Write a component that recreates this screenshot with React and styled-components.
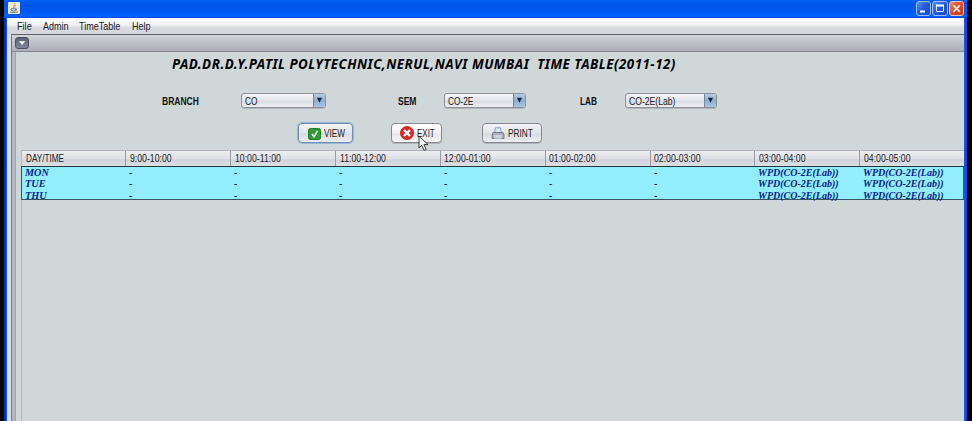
import React from "react";
import styled, { createGlobalStyle } from "styled-components";

const Global = createGlobalStyle`
  * { box-sizing: border-box; }
  body { margin: 0; background: #000; overflow: hidden; }
`;

const Screen = styled.div`
  width: 972px;
  height: 421px;
  padding: 0 5px 0 4px;
  background: #000;
  font-family: "Liberation Sans", Arial, sans-serif;
  font-size: 10.5px;
  color: #222;
  white-space: nowrap;
`;

const Window = styled.div`
  height: 421px;
  display: flex;
  flex-direction: column;
  padding: 0 2px 0 3px;
  background: linear-gradient(90deg, #0024c0 0, #0038ee 2px, #1c60f0 3px, #1c60f0 960px, #0a3cd8 963px);
`;

const TitleBar = styled.header`
  height: 18px;
  flex: none;
  margin: 0 -2px 0 -3px;
  padding: 0 3px 0 4px;
  display: flex;
  align-items: flex-start;
  justify-content: space-between;
  background: linear-gradient(#0060f4 0, #0055ea 5px, #0058f4 12px, #0062ff 16px, #0048d8 18px);
`;

const JavaIcon = styled.svg`
  width: 12px;
  height: 12px;
  margin-top: 2px;
`;

const Controls = styled.div`
  display: flex;
  gap: 1px;
  padding-top: 1px;
`;

const Control = styled.div`
  width: 15.5px;
  height: 15px;
  border: 1px solid ${(p) => (p.$close ? "#f3c1b4" : "#9dbdf8")};
  border-radius: 3px;
  background: ${(p) =>
    p.$close
      ? "linear-gradient(135deg, #f08a68, #e2491f 50%, #c83808)"
      : "linear-gradient(135deg, #5a8df2, #2259dc 50%, #1648cc)"};
  svg { display: block; width: 13px; height: 13px; }
`;

/* Narrow interface lettering: full height, condensed horizontally. */
const Text = styled.span`
  display: inline-block;
  transform: scaleX(${(p) => p.$x});
  transform-origin: left center;
`;

const MenuBar = styled.nav`
  height: 16px;
  flex: none;
  display: flex;
  gap: 12px;
  padding: 2px 0 0 9.5px;
  margin-right: 1px;
  line-height: 13px;
  background: linear-gradient(#ffffff, #f0f0f3 45%, #d9dbe0 60%, #d4d6dc);
`;

const MenuItem = styled.div`
  width: ${(p) => p.$w}px;
`;

const Desktop = styled.div`
  flex: 1;
  min-height: 0;
  margin-right: 1px;
  padding-left: 4px;
  background: #dcdfe4;
`;

const InternalFrame = styled.section`
  height: 100%;
  display: flex;
  flex-direction: column;
  border-top: 1px solid #5e626b;
  border-left: 1px solid #747883;
  background: #b4b8c2;
`;

const FrameBar = styled.div`
  height: 17px;
  flex: none;
  padding: 2px 0 0 3px;
  border-bottom: 1px solid #858892;
  background: linear-gradient(#d2d5d9, #bec1c8 45%, #acafb9);
`;

const FrameMenu = styled.div`
  width: 14px;
  height: 12px;
  border: 1px solid #4a5164;
  border-radius: 3px;
  background: linear-gradient(#5c6478, #7d869b);
  svg { display: block; width: 12px; height: 10px; }
`;

const Content = styled.main`
  flex: 1;
  min-height: 0;
  display: flex;
  flex-direction: column;
  margin-left: 3px;
  padding-left: 5px;
  border-left: 1px solid #9da4ac;
  background: #cfd7d9;
`;

const Heading = styled.h1`
  height: 36px;
  flex: none;
  margin: 0;
  padding: 3px 0 0 151px;
  font: italic bold 13.3px/18px "Noto Sans", sans-serif;
  letter-spacing: 0.51px;
  color: #000;
  white-space: pre;
`;

const Filters = styled.div`
  height: 26px;
  flex: none;
  display: flex;
  align-items: center;
  padding: 0 0 1px 141px;
`;

const Label = styled.label`
  width: ${(p) => p.$w}px;
  font-weight: bold;
  color: #111;
`;

const Select = styled.div`
  width: ${(p) => p.$w}px;
  height: 15px;
  margin-right: ${(p) => p.$after || 0}px;
  display: flex;
  justify-content: space-between;
  border: 1px solid #8d9199;
  border-radius: 3px;
  padding-left: 3px;
  line-height: 14px;
  overflow: hidden;
  background: linear-gradient(#f5f6f8, #e2e4e9 50%, #d9dce1 55%, #edeff2);
  box-shadow: 0 1px 0 #b0b6ba;
`;

const Arrow = styled.svg`
  width: 12px;
  height: 13px;
  border-left: 1px solid #7189a5;
  background: linear-gradient(#b5cbe2, #90afd0 50%, #a9c4df);
`;

const Actions = styled.div`
  height: 36px;
  flex: none;
  display: flex;
  align-items: flex-start;
  padding: 9px 0 0 277px;
`;

const Button = styled.div`
  width: ${(p) => p.$w}px;
  height: 20px;
  margin-right: ${(p) => p.$after || 0}px;
  padding-left: ${(p) => p.$pad}px;
  display: flex;
  align-items: center;
  gap: 3px;
  position: relative;
  border: 1px solid ${(p) => (p.$focus ? "#6d8fb9" : "#858991")};
  border-radius: 4px;
  box-shadow: ${(p) => (p.$focus ? "0 0 0 1px #9db5d2" : "0 1px 0 #b0b6ba")};
  background: ${(p) =>
    p.$hover
      ? "linear-gradient(#ffffff, #f1f2f5 50%, #e4e6eb 55%, #fbfbfc)"
      : "linear-gradient(#f3f4f6, #e2e4e8 50%, #d8dbe0 55%, #eceef1)"};
`;

const Glyph = styled.svg`
  flex: none;
  width: ${(p) => p.$w}px;
  height: ${(p) => p.$h}px;
  margin-top: ${(p) => p.$drop || 0}px;
`;

const Cursor = styled.svg`
  position: absolute;
  left: 26px;
  top: 11px;
  width: 11px;
  height: 17px;
  z-index: 2;
`;

const Table = styled.div`
  flex: 1;
  min-height: 0;
  border-left: 1px solid #b3b9c1;
`;

const Row = styled.div`
  display: grid;
  grid-template-columns: 104.4px repeat(8, 104.85px);
  overflow: hidden;
`;

const HeaderRow = styled(Row)`
  height: 16px;
  line-height: 15px;
  border-top: 1px solid #aeb2b9;
  background: linear-gradient(#eceef1, #dfe0e6 50%, #d2d4dc 60%, #dddfe5);
`;

const HeaderCell = styled.div`
  padding-left: 3.5px;
  border-right: 1px solid #989ca5;
`;

const Body = styled.div`
  height: 34px;
  margin-left: -1px;
  border: 1px solid #34565e;
  border-top-color: #20373c;
  background: #92eefc;
  font: italic bold 11px/11px "Liberation Serif", "Times New Roman", serif;
  color: #081b91;
`;

const BodyRow = styled(Row)`
  height: 11.3px;
`;

const Cell = styled.div`
  padding-left: 3px;
`;

const times = ["9:00-10:00", "10:00-11:00", "11:00-12:00", "12:00-01:00", "01:00-02:00", "02:00-03:00", "03:00-04:00", "04:00-05:00"];
const days = ["MON", "TUE", "THU"];
const slots = ["-", "-", "-", "-", "-", "-", "WPD(CO-2E(Lab))", "WPD(CO-2E(Lab))"];

function Combo({ value, w, after, x }) {
  return (
    <Select $w={w} $after={after}>
      <Text $x={x}>{value}</Text>
      <Arrow viewBox="0 0 12 13"><path d="M3.2 3.5h5.6L6 9z" fill="#1c2634" /></Arrow>
    </Select>
  );
}

export default function App() {
  return (
    <Screen>
      <Global />
      <Window>
        <TitleBar>
          <JavaIcon viewBox="0 0 12 12">
            <rect width="12" height="12" rx="1" fill="#eeeae4" />
            <path d="M6.5 1C8 3 4 3.5 5.8 6M7.8 3C6 4 7.5 5 6.6 6" fill="none" stroke="#e28642" />
            <path d="M3 6.8h5v1.5q-2.5 1.5-5 0zM8 7q2 .1 0 1.3M2 10q4 1.2 8-.2" fill="none" stroke="#657b91" />
          </JavaIcon>
          <Controls>
            <Control><svg viewBox="0 0 13 13"><path d="M3 9.5h5" stroke="#fff" strokeWidth="2" /></svg></Control>
            <Control><svg viewBox="0 0 13 13"><path d="M3.5 3.5h7v6h-7z" fill="none" stroke="#dbe8ff" /><path d="M3 3.5h8" stroke="#fff" strokeWidth="2" /></svg></Control>
            <Control $close><svg viewBox="0 0 13 13"><path d="M3.3 3.3l6.7 6.7M10 3.3L3.3 10" stroke="#fff" strokeWidth="1.6" /></svg></Control>
          </Controls>
        </TitleBar>
        <MenuBar>
          <MenuItem $w={14}><Text $x={0.87}>File</Text></MenuItem>
          <MenuItem $w={24.5}><Text $x={0.86}>Admin</Text></MenuItem>
          <MenuItem $w={40.5}><Text $x={0.86}>TimeTable</Text></MenuItem>
          <MenuItem $w={20}><Text $x={0.86}>Help</Text></MenuItem>
        </MenuBar>
        <Desktop>
          <InternalFrame>
            <FrameBar>
              <FrameMenu><svg viewBox="0 0 12 10"><path d="M3 3.2h6.2L6.1 7z" fill="#fff" /></svg></FrameMenu>
            </FrameBar>
            <Content>
              <Heading>PAD.DR.D.Y.PATIL POLYTECHNIC,NERUL,NAVI MUMBAI  TIME TABLE(2011-12)</Heading>
              <Filters>
                <Label $w={79}><Text $x={0.81}>BRANCH</Text></Label>
                <Combo value="CO" w={85} after={72} x={0.79} />
                <Label $w={45.5}><Text $x={0.81}>SEM</Text></Label>
                <Combo value="CO-2E" w={82.5} after={54} x={0.79} />
                <Label $w={44.5}><Text $x={0.79}>LAB</Text></Label>
                <Combo value="CO-2E(Lab)" w={92.5} x={0.82} />
              </Filters>
              <Actions>
                <Button $w={55} $after={37.5} $pad={9} $focus>
                  <Glyph $w={13} $h={12} $drop={2} viewBox="0 0 13 12">
                    <rect x=".5" y=".5" width="12" height="11" rx="2" fill="#2d9b35" stroke="#1f7e29" />
                    <path d="M4 6l2 3L9.5 2.8" fill="none" stroke="#fff" strokeWidth="1.4" />
                  </Glyph>
                  <Text $x={0.78}>VIEW</Text>
                </Button>
                <Button $w={51} $after={40} $pad={8} $hover>
                  <Glyph $w={14} $h={14} viewBox="0 0 14 14">
                    <circle cx="7" cy="7" r="6.6" fill="#dc2b24" stroke="#c12620" strokeWidth=".8" />
                    <path d="M4 4l6 6M10 4l-6 6" stroke="#fff" strokeWidth="2.4" />
                  </Glyph>
                  <Text $x={0.76}>EXIT</Text>
                  <Cursor viewBox="0 0 11 17">
                    <path d="M1 1v12l2.8-2.6 2.4 5 2-1-2.3-4.8H10z" fill="#fff" stroke="#222" strokeWidth=".9" />
                  </Cursor>
                </Button>
                <Button $w={60} $pad={8}>
                  <Glyph $w={14} $h={13} viewBox="0 0 13 13">
                    <path d="M3 6L4 .8h5l1 5.2z" fill="#d7e9ff" stroke="#6d93c2" strokeWidth=".8" />
                    <path d="M1.5 5.5h10l1 2.5v3.5H.6V8z" fill="#a9b0ba" stroke="#636d7c" strokeWidth=".8" />
                    <path d="M2.5 9h8M3 11h7" stroke="#eef3fa" />
                  </Glyph>
                  <Text $x={0.79}>PRINT</Text>
                </Button>
              </Actions>
              <Table>
                <HeaderRow>
                  <HeaderCell><Text $x={0.78}>DAY/TIME</Text></HeaderCell>
                  {times.map((t) => <HeaderCell key={t}><Text $x={0.83}>{t}</Text></HeaderCell>)}
                </HeaderRow>
                <Body>
                  {days.map((d) => (
                    <BodyRow key={d}>
                      <Cell><Text $x={0.93}>{d}</Text></Cell>
                      {slots.map((s, i) => <Cell key={i}><Text $x={0.91}>{s}</Text></Cell>)}
                    </BodyRow>
                  ))}
                </Body>
              </Table>
            </Content>
          </InternalFrame>
        </Desktop>
      </Window>
    </Screen>
  );
}
